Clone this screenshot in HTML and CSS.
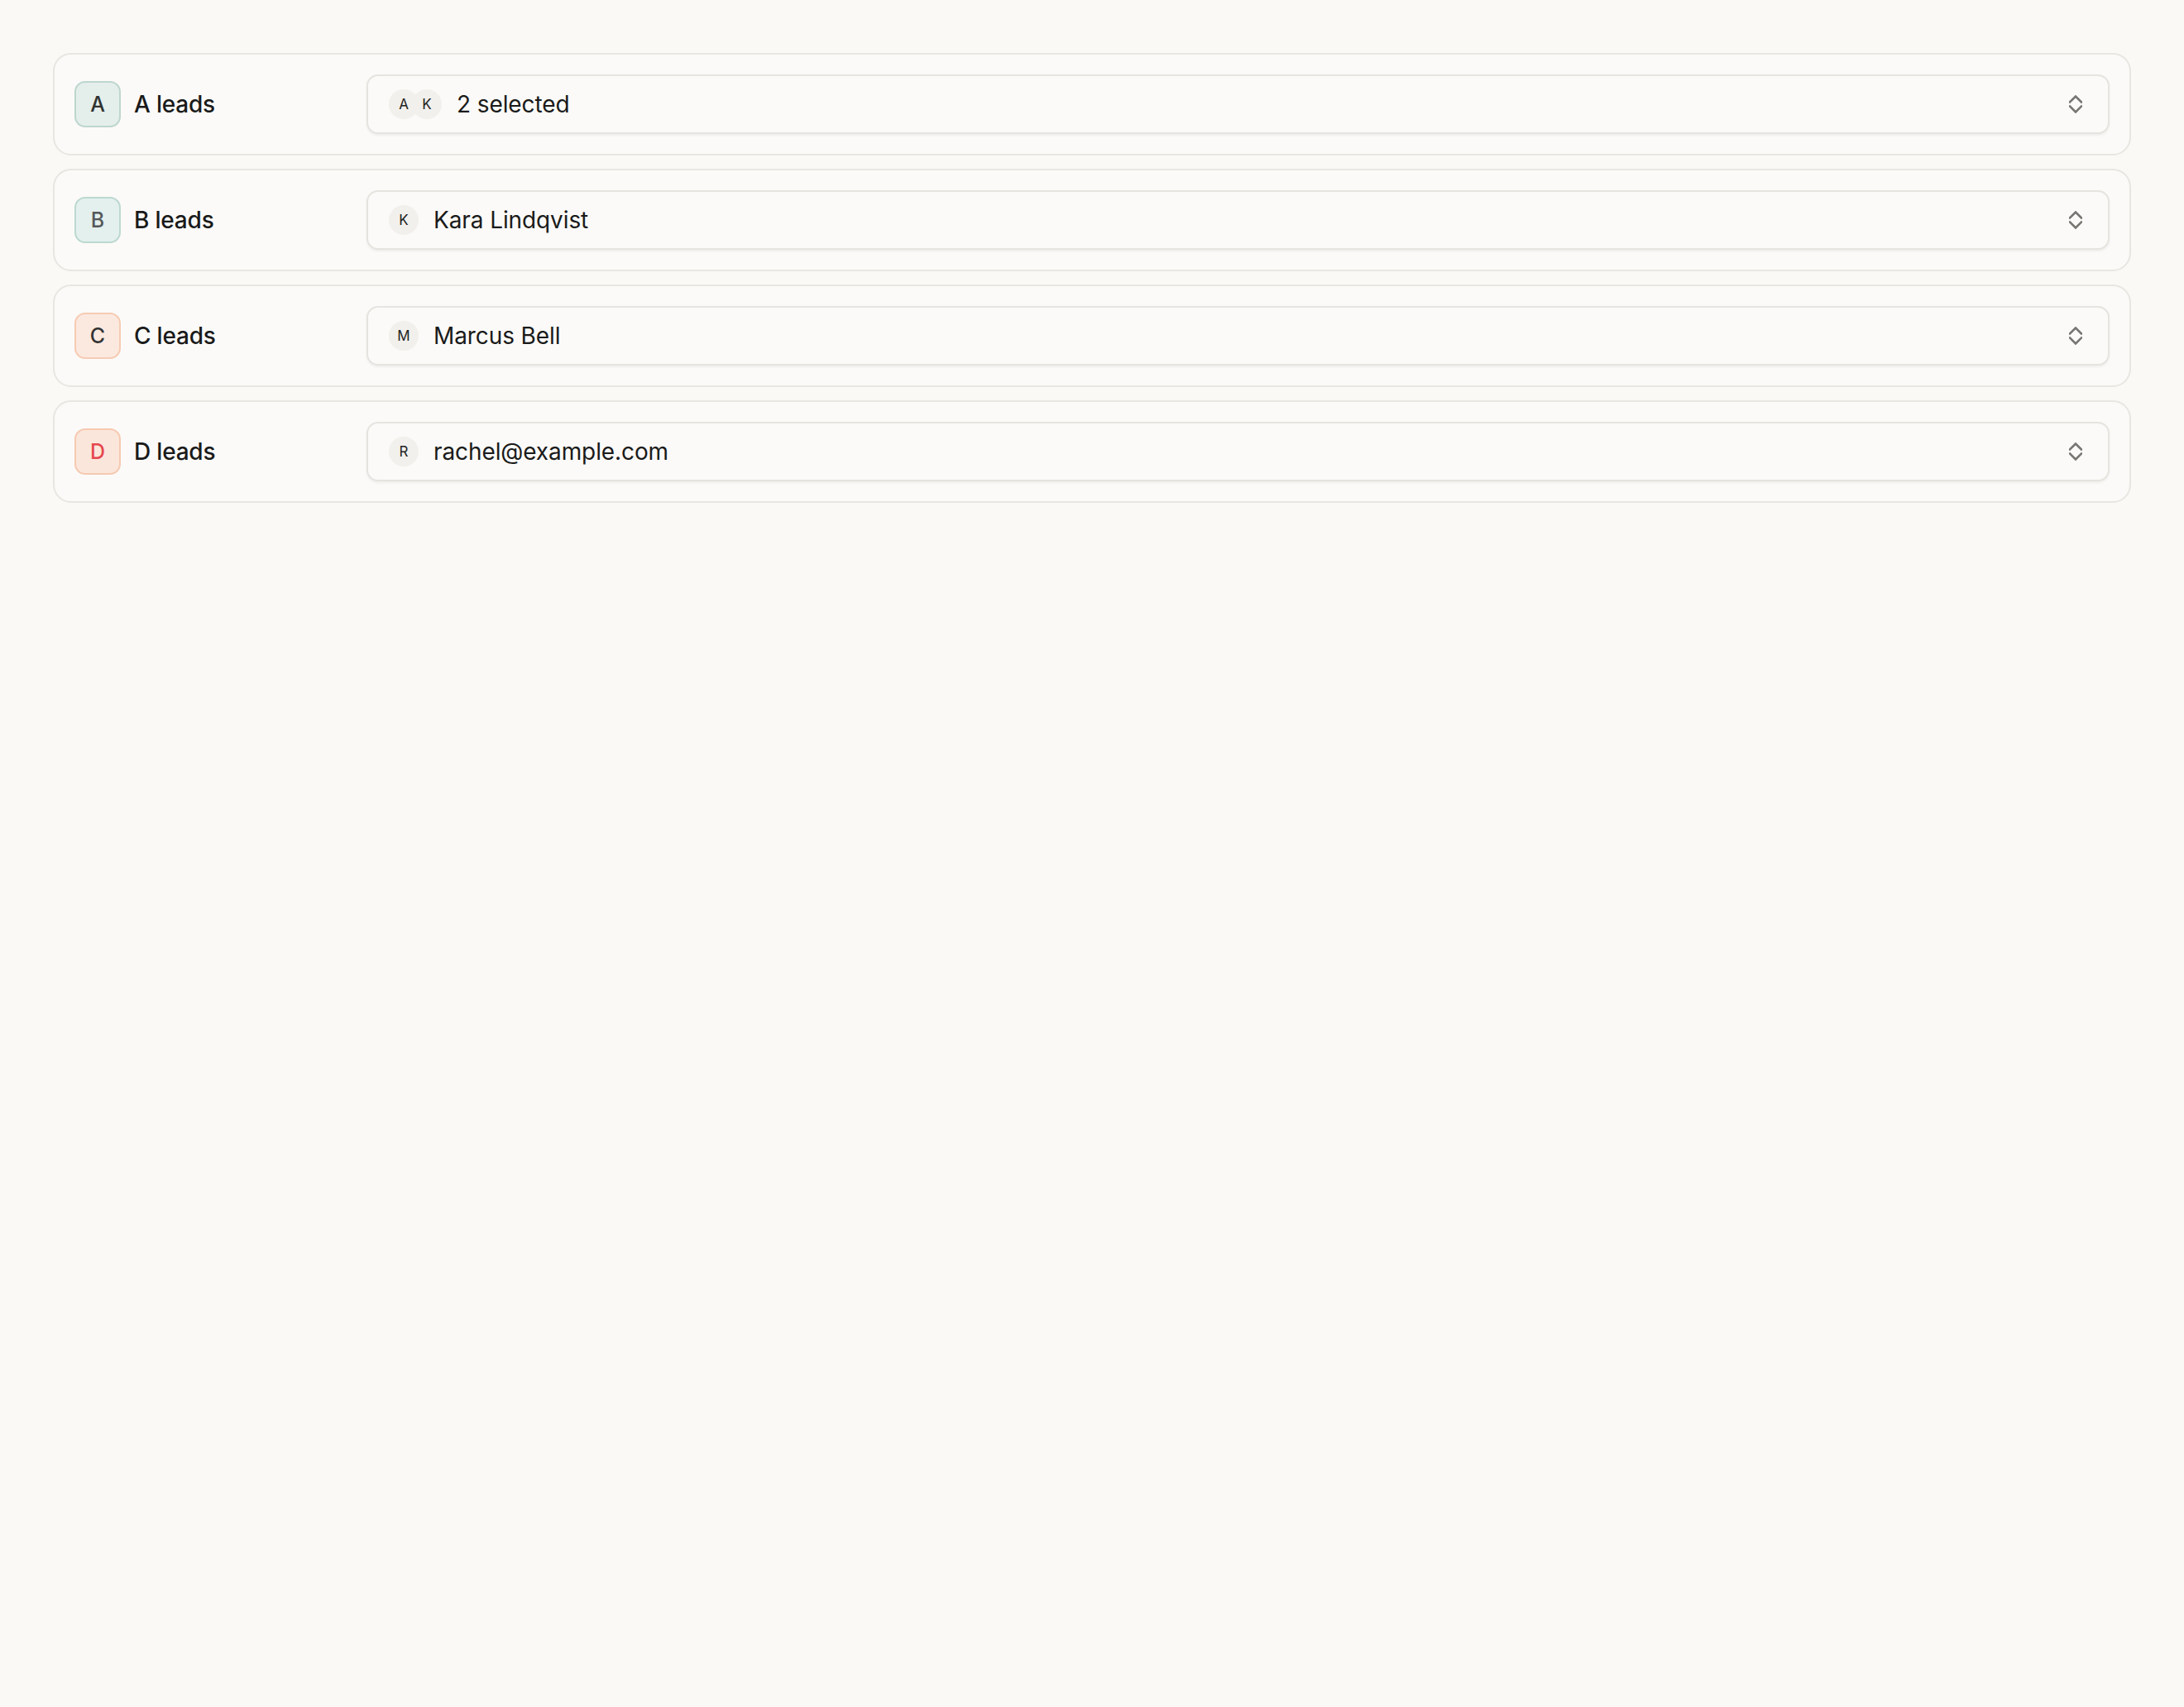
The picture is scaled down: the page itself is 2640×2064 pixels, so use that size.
FILE: index.html
```html
<!DOCTYPE html>
<html lang="en">
<head>
<meta charset="utf-8">
<title>Lead routing</title>
<link rel="stylesheet" href="styles.css">
</head>
<body>
<main class="list">
  <div class="card">
    <div class="label"><span class="badge badge-a">A</span><span class="name">A leads</span></div>
    <button class="select">
      <span class="avatars"><span class="avatar">A</span><span class="avatar">K</span></span>
      <span class="value">2 selected</span>
      <svg class="chev" viewBox="0 0 16 22" width="16" height="22"><path d="M1 8.5 8 1.5 15 8.5M1 13.5 8 20.5 15 13.5"/></svg>
    </button>
  </div>
  <div class="card">
    <div class="label"><span class="badge badge-b">B</span><span class="name">B leads</span></div>
    <button class="select">
      <span class="avatars"><span class="avatar">K</span></span>
      <span class="value">Kara Lindqvist</span>
      <svg class="chev" viewBox="0 0 16 22" width="16" height="22"><path d="M1 8.5 8 1.5 15 8.5M1 13.5 8 20.5 15 13.5"/></svg>
    </button>
  </div>
  <div class="card">
    <div class="label"><span class="badge badge-c">C</span><span class="name">C leads</span></div>
    <button class="select">
      <span class="avatars"><span class="avatar">M</span></span>
      <span class="value">Marcus Bell</span>
      <svg class="chev" viewBox="0 0 16 22" width="16" height="22"><path d="M1 8.5 8 1.5 15 8.5M1 13.5 8 20.5 15 13.5"/></svg>
    </button>
  </div>
  <div class="card">
    <div class="label"><span class="badge badge-d">D</span><span class="name">D leads</span></div>
    <button class="select">
      <span class="avatars"><span class="avatar">R</span></span>
      <span class="value">rachel@example.com</span>
      <svg class="chev" viewBox="0 0 16 22" width="16" height="22"><path d="M1 8.5 8 1.5 15 8.5M1 13.5 8 20.5 15 13.5"/></svg>
    </button>
  </div>
</main>
</body>
</html>
```

FILE: styles.css
```css
html, body {
  margin: 0;
  padding: 0;
  background: #faf9f6;
  font-family: Inter, "Noto Sans", sans-serif;
  color: #1a1a1a;
}

.list {
  display: flex;
  flex-direction: column;
  gap: 16px;
  padding: 64px;
}

.card {
  display: flex;
  align-items: center;
  gap: 16px;
  padding: 24px;
  border: 2px solid #e8e6e1;
  border-radius: 22px;
  background: #fbfaf8;
}

.label {
  flex: 0 0 337px;
  display: flex;
  align-items: center;
  gap: 16px;
}

.badge {
  width: 52px;
  height: 52px;
  border: 2px solid;
  border-radius: 13px;
  display: flex;
  align-items: center;
  justify-content: center;
  font-size: 25px;
  font-weight: 500;
}

.badge-a { background: #e4eeeb; border-color: #bdd6ce; color: #2f3331; }
.badge-b { background: #e3f0ed; border-color: #bcd8d0; color: #55585a; }
.badge-c { background: #fbe9df; border-color: #f6cbb3; color: #333333; }
.badge-d { background: #fbe6db; border-color: #f6c9b1; color: #e5484d; }

.name {
  font-size: 28px;
  font-weight: 500;
  letter-spacing: -0.2px;
}

.select {
  flex: 1;
  height: 72px;
  box-sizing: border-box;
  display: flex;
  align-items: center;
  gap: 18px;
  padding: 0 31px 0 25px;
  border: 2px solid #e6e4df;
  border-radius: 14px;
  background: #fbfaf8;
  box-shadow: 0 2px 3px rgba(0, 0, 0, 0.05);
  font-family: inherit;
  color: #1a1a1a;
  text-align: left;
  cursor: pointer;
}

.avatars {
  display: flex;
}

.avatar {
  width: 36px;
  height: 36px;
  border-radius: 50%;
  background: #f1f0ec;
  display: flex;
  align-items: center;
  justify-content: center;
  font-size: 17px;
  color: #222;
}

.avatar + .avatar {
  margin-left: -8px;
}

.value {
  flex: 1;
  font-size: 28px;
  font-weight: 400;
  letter-spacing: -0.1px;
}

.chev {
  fill: none;
  stroke: #777673;
  stroke-width: 2.6;
  stroke-linecap: square;
}
```
